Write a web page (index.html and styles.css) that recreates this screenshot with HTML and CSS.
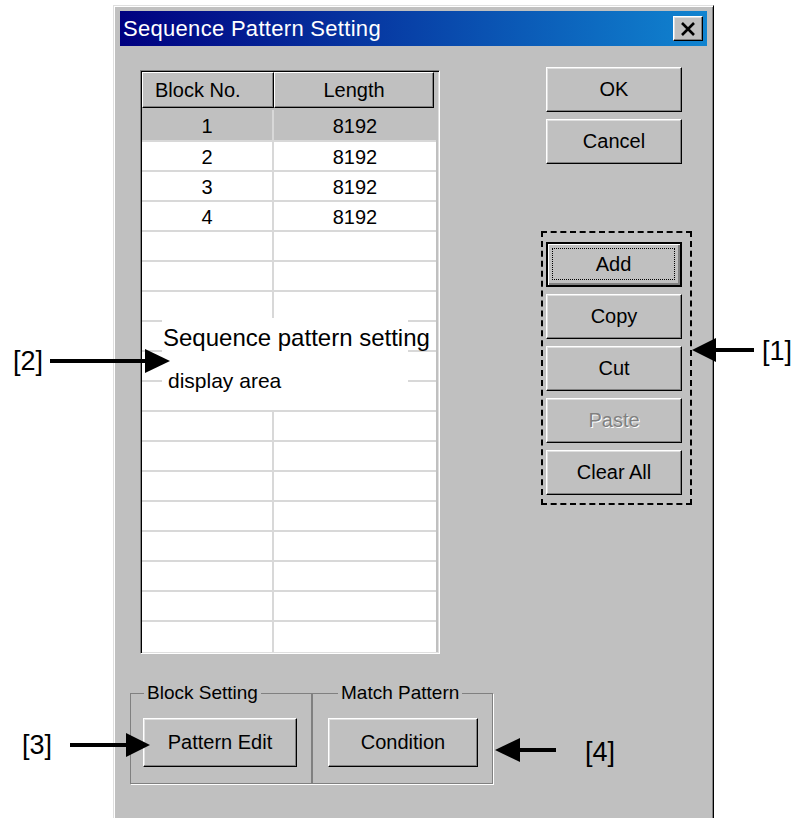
FILE: index.html
```html
<!DOCTYPE html>
<html>
<head>
<meta charset="utf-8">
<link rel="stylesheet" href="styles.css">
</head>
<body>
<div class="page">
  <div class="window">
    <div class="titlebar">
      <span class="title">Sequence Pattern Setting</span>
      <span class="close"><svg width="16" height="14" viewBox="0 0 16 14"><path d="M2 1 L14 13 M14 1 L2 13" stroke="#000" stroke-width="2.6" fill="none"/></svg></span>
    </div>
    <div class="content">
      <div class="left">
        <div class="listview">
          <div class="lv-head">
            <div class="hcell c1">Block No.</div>
            <div class="hcell c2">Length</div>
          </div>
          <div class="row first sel"><div class="cell c1">1</div><div class="cell c2">8192</div></div>
          <div class="row"><div class="cell c1">2</div><div class="cell c2">8192</div></div>
          <div class="row"><div class="cell c1">3</div><div class="cell c2">8192</div></div>
          <div class="row"><div class="cell c1">4</div><div class="cell c2">8192</div></div>
          <div class="row"><div class="cell c1"></div><div class="cell c2"></div></div>
          <div class="row"><div class="cell c1"></div><div class="cell c2"></div></div>
          <div class="row"><div class="cell c1"></div><div class="cell c2"></div></div>
          <div class="row"><div class="cell c1"></div><div class="cell c2"></div></div>
          <div class="row"><div class="cell c1"></div><div class="cell c2"></div></div>
          <div class="row"><div class="cell c1"></div><div class="cell c2"></div></div>
          <div class="row"><div class="cell c1"></div><div class="cell c2"></div></div>
          <div class="row"><div class="cell c1"></div><div class="cell c2"></div></div>
          <div class="row"><div class="cell c1"></div><div class="cell c2"></div></div>
          <div class="row"><div class="cell c1"></div><div class="cell c2"></div></div>
          <div class="row"><div class="cell c1"></div><div class="cell c2"></div></div>
          <div class="row"><div class="cell c1"></div><div class="cell c2"></div></div>
          <div class="row"><div class="cell c1"></div><div class="cell c2"></div></div>
          <div class="row last"><div class="cell c1"></div><div class="cell c2"></div></div>
        </div>
        <div class="groups">
          <fieldset class="group g1">
            <legend>Block Setting</legend>
            <button class="btn big">Pattern Edit</button>
          </fieldset>
          <fieldset class="group g2">
            <legend>Match Pattern</legend>
            <button class="btn big">Condition</button>
          </fieldset>
        </div>
      </div>
      <div class="right">
        <button class="btn">OK</button>
        <button class="btn">Cancel</button>
        <button class="btn default spaced"><span class="focus">Add</span></button>
        <button class="btn">Copy</button>
        <button class="btn">Cut</button>
        <button class="btn disabled">Paste</button>
        <button class="btn">Clear All</button>
      </div>
    </div>
  </div>

  <div class="note-box">
    <div class="note-main">Sequence pattern setting</div>
    <div class="note-sub">display area</div>
  </div>
  <div class="dash-box"></div>

  <svg class="arrows" width="801" height="818" viewBox="0 0 801 818">
    <g fill="#000" stroke="#000">
      <line x1="714" y1="350" x2="754" y2="350" stroke-width="4"/>
      <polygon points="692,350 716,338 716,362" stroke="none"/>
      <line x1="50" y1="361" x2="147" y2="361" stroke-width="4"/>
      <polygon points="170,361 145,349 145,373" stroke="none"/>
      <line x1="70" y1="745" x2="128" y2="745" stroke-width="4"/>
      <polygon points="150,745 126,733 126,757" stroke="none"/>
      <line x1="518" y1="750" x2="556" y2="750" stroke-width="4"/>
      <polygon points="495,750 520,738 520,762" stroke="none"/>
    </g>
  </svg>
  <span class="tag t1">[1]</span>
  <span class="tag t2">[2]</span>
  <span class="tag t3">[3]</span>
  <span class="tag t4">[4]</span>
</div>
</body>
</html>
```

FILE: styles.css
```css
html, body {
  margin: 0;
  padding: 0;
  background: #fff;
}

.page {
  position: relative;
  width: 801px;
  height: 818px;
  overflow: hidden;
  font-family: "Liberation Sans", Arial, sans-serif;
}

.window {
  box-sizing: border-box;
  width: 601px;
  height: 840px;
  margin: 5px 0 0 113px;
  background: #c0c0c0;
  border: 1px solid;
  border-color: #dfdfdf #000 #000 #dfdfdf;
  box-shadow: inset 1px 1px #fff, inset -1px -1px #808080;
  padding: 5px 6px 0 6px;
}

.titlebar {
  height: 35px;
  display: flex;
  align-items: center;
  justify-content: space-between;
  background: linear-gradient(to right, #000080, #1084d0);
  padding: 0 4px 0 3px;
}

.title {
  color: #fff;
  font-size: 22px;
  letter-spacing: 0.3px;
}

.close {
  box-sizing: border-box;
  width: 30px;
  height: 25px;
  display: flex;
  align-items: center;
  justify-content: center;
  background: #c0c0c0;
  border: 1px solid;
  border-color: #fff #000 #000 #fff;
  box-shadow: inset -1px -1px #808080, inset 1px 1px #dfdfdf;
}

.content {
  display: flex;
  padding: 21px 0 0 10px;
}

.left {
  width: 363px;
}

.listview {
  box-sizing: border-box;
  width: 300px;
  margin: 3px 0 0 10px;
  border: 1px solid;
  border-color: #808080 #fff #fff #808080;
  box-shadow: inset 1px 1px #000, inset -1px -1px #dfdfdf;
  padding: 1px;
  background: #c0c0c0;
}

.lv-head {
  display: flex;
  height: 38px;
}

.hcell {
  box-sizing: border-box;
  height: 36px;
  font-size: 20px;
  display: flex;
  align-items: center;
  border: 1px solid;
  border-color: #fff #000 #000 #fff;
  box-shadow: inset -1px -1px #808080;
}

.hcell.c1 {
  width: 132px;
  padding-left: 12px;
}

.hcell.c2 {
  width: 160px;
  justify-content: center;
}

.row {
  display: flex;
  height: 30px;
  background: #fff;
  margin-right: 2px;
}

.row.first {
  height: 32px;
}

.row.sel {
  background: #c0c0c0;
}

.cell {
  box-sizing: border-box;
  height: 100%;
  font-size: 20px;
  display: flex;
  align-items: center;
  justify-content: center;
  border-bottom: 2px solid #d8d8d8;
  padding-top: 2px;
}

.row.last .cell {
  border-bottom: none;
}

.cell.c1 {
  width: 132px;
  border-right: 2px solid #d8d8d8;
}

.cell.c2 {
  flex: 1;
}

.groups {
  display: flex;
  margin-top: 28px;
}

.group {
  box-sizing: border-box;
  margin: 0;
  height: 102px;
  border: 1px solid #808080;
  box-shadow: 1px 1px 0 #fff;
  padding: 14px 0 0 12px;
  min-inline-size: 0;
}

.g1 {
  width: 182px;
}

.g2 {
  width: 181px;
  padding-left: 15px;
}

.group legend {
  font-size: 19px;
  padding: 0 3px;
  margin-left: 1px;
  line-height: 22px;
}

.g2 legend {
  margin-left: 10px;
}

.right {
  display: flex;
  flex-direction: column;
  gap: 7px;
  margin-left: 53px;
}

.btn {
  box-sizing: border-box;
  width: 136px;
  height: 45px;
  padding: 0;
  font-family: "Liberation Sans", Arial, sans-serif;
  font-size: 20px;
  color: #000;
  background: #c0c0c0;
  border: 1px solid;
  border-color: #fff #000 #000 #fff;
  box-shadow: inset -1px -1px #808080, inset 1px 1px #dfdfdf;
  display: flex;
  align-items: center;
  justify-content: center;
}

.btn.big {
  height: 49px;
  width: 154px;
}

.g2 .btn.big {
  width: 150px;
}

.btn.spaced {
  margin-top: 71px;
}

.btn.default {
  border: 2px solid #000;
  box-shadow: inset 1px 1px #fff, inset -2px -2px #808080;
  padding: 4px 5px 5px 4px;
}

.focus {
  box-sizing: border-box;
  width: 100%;
  height: 100%;
  border: 1px dotted #000;
  display: flex;
  align-items: center;
  justify-content: center;
}

.btn.disabled {
  color: #808080;
  text-shadow: 1px 1px #fff;
}

.note-box {
  position: absolute;
  left: 162px;
  top: 318px;
  width: 246px;
  height: 92px;
  background: #fff;
}

.note-main {
  font-size: 24px;
  line-height: 28px;
  margin-top: 6px;
  white-space: nowrap;
  margin-left: 1px;
}

.note-sub {
  font-size: 21px;
  line-height: 26px;
  margin-top: 16px;
  margin-left: 6px;
}

.dash-box {
  position: absolute;
  left: 541px;
  top: 231px;
  width: 147px;
  height: 270px;
  border: 2px dashed #000;
}

.arrows {
  position: absolute;
  left: 0;
  top: 0;
}

.tag {
  position: absolute;
  font-size: 27px;
  line-height: 30px;
  color: #000;
}

.t1 { left: 762px; top: 336px; }
.t2 { left: 13px; top: 346px; }
.t3 { left: 22px; top: 730px; }
.t4 { left: 585px; top: 737px; }
```
